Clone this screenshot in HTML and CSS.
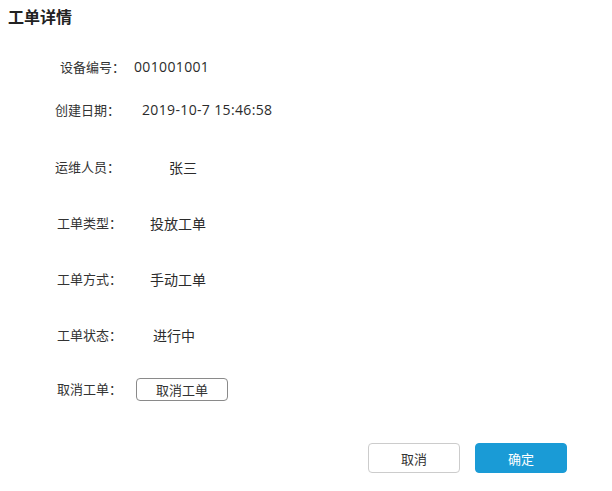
FILE: index.html
```html
<!DOCTYPE html>
<html lang="zh-CN">
<head>
<meta charset="utf-8">
<title>工单详情</title>
<link rel="stylesheet" href="styles.css">
</head>
<body>
<div class="dialog">
  <h1 class="title">工单详情</h1>
  <div class="form">
    <div class="row row-1"><span class="label">设备编号：</span><span class="value num v-1">001001001</span></div>
    <div class="row row-2"><span class="label">创建日期：</span><span class="value num v-2">2019-10-7 15:46:58</span></div>
    <div class="row row-3"><span class="label">运维人员：</span><span class="value v-3">张三</span></div>
    <div class="row row-4"><span class="label">工单类型：</span><span class="value v-4">投放工单</span></div>
    <div class="row row-5"><span class="label">工单方式：</span><span class="value v-5">手动工单</span></div>
    <div class="row row-6"><span class="label">工单状态：</span><span class="value v-6">进行中</span></div>
    <div class="row row-7"><span class="label">取消工单：</span><button class="btn-small" type="button">取消工单</button></div>
  </div>
  <div class="footer">
    <button class="btn btn-cancel" type="button">取消</button>
    <button class="btn btn-ok" type="button">确定</button>
  </div>
</div>
</body>
</html>
```

FILE: styles.css
```css
html, body {
  margin: 0;
  padding: 0;
  background: #ffffff;
}
body {
  font-family: "Noto Sans CJK SC", "Noto Sans", sans-serif;
  font-size: 13px;
  color: #333333;
}
.dialog {
  width: 612px;
  height: 491px;
  box-sizing: border-box;
}
.title {
  margin: 0;
  padding: 4px 0 0 8px;
  font-size: 16px;
  line-height: 24px;
  font-weight: bold;
  color: #222222;
}
.form {
  display: flex;
  flex-direction: column;
  margin-top: 29px;
}
.row {
  display: flex;
  align-items: center;
  height: 20px;
  line-height: 20px;
  white-space: nowrap;
}
.label {
  width: 65px;
}
.value {
  font-size: 14px;
  color: #2b2b2b;
}
.num {
  font-family: "Open Sans", "Noto Sans CJK SC", sans-serif;
  letter-spacing: 0.35px;
}
.row-1 { padding-left: 60px; }
.row-2 { padding-left: 55px; margin-top: 23px; }
.row-3 { padding-left: 55px; margin-top: 37px; }
.row-4 { padding-left: 57px; margin-top: 36px; }
.row-5 { padding-left: 57px; margin-top: 36px; }
.row-6 { padding-left: 57px; margin-top: 36px; }
.row-7 { padding-left: 57px; margin-top: 32px; height: 24px; }
.v-1 { margin-left: 9px; }
.v-2 { margin-left: 22px; }
.v-3 { margin-left: 49px; }
.v-4 { margin-left: 28px; }
.v-5 { margin-left: 28px; }
.v-6 { margin-left: 31px; }
.btn-small {
  margin-left: 14px;
  width: 92px;
  height: 23px;
  padding: 0;
  border: 1px solid #8a8a8a;
  border-radius: 4px;
  background: #ffffff;
  font-family: inherit;
  font-size: 13px;
  color: #333333;
  line-height: 21px;
}
.footer {
  display: flex;
  justify-content: flex-end;
  gap: 15px;
  margin-top: 42px;
  padding-right: 45px;
}
.btn {
  width: 92px;
  height: 30px;
  padding: 0;
  border-radius: 4px;
  font-family: inherit;
  font-size: 13px;
}
.btn-cancel {
  background: #ffffff;
  border: 1px solid #cccccc;
  color: #333333;
}
.btn-ok {
  background: #1a9bd6;
  border: 1px solid #1a9bd6;
  color: #ffffff;
}
```
